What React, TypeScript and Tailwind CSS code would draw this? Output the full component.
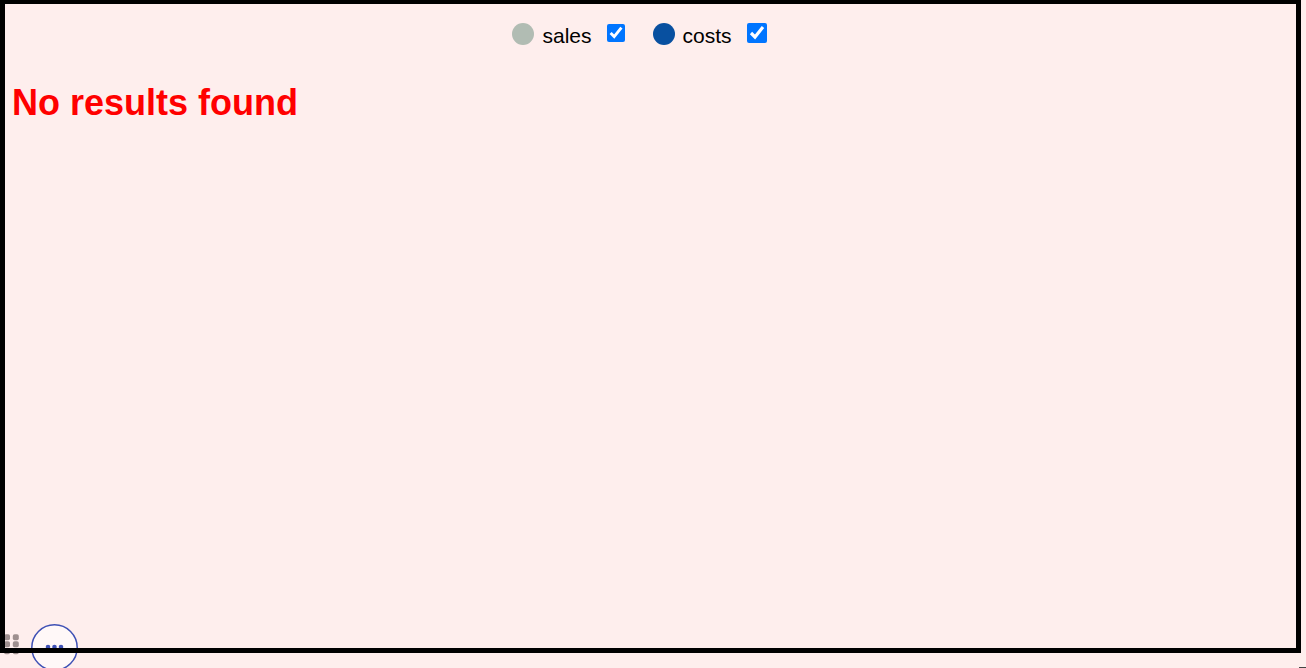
import { useState } from 'react';

const series = [
  { id: 'sales', dot: 'bg-[#b1bcb3]', box: 'size-[18px]' },
  { id: 'costs', dot: 'bg-[#0850a0]', box: 'size-5' },
];

function Legend() {
  const [visible, setVisible] = useState<Record<string, boolean>>({ sales: true, costs: true });

  return (
    <div className="flex justify-center gap-7 pt-4 pr-[22px]">
      {series.map(({ id, dot, box }) => (
        <div key={id} className="flex h-8 items-center">
          <span className={`mr-2 mb-1 size-[22px] rounded-full ${dot}`} />
          <label htmlFor={id} className="mr-[15px] text-[21px] leading-8">
            {id}
          </label>
          <input
            id={id}
            type="checkbox"
            checked={visible[id]}
            onChange={() => setVisible({ ...visible, [id]: !visible[id] })}
            className={`mb-1.5 ${box}`}
          />
        </div>
      ))}
    </div>
  );
}

// Floating handle in the corner, it sits below the panel border
function FloatingMenu() {
  return (
    <div className="absolute -bottom-[3px] left-1 flex items-center gap-3">
      <svg className="mb-1.5" width="15" height="22" viewBox="0 0 15 22" fill="#9e8f8f" aria-hidden="true">
        {[0, 7, 14].map((y) => (
          <g key={y}>
            <rect x="0" y={y + 0.3} width="6" height="6" rx="1.8" />
            <rect x="8.8" y={y + 0.3} width="6" height="6" rx="1.8" />
          </g>
        ))}
      </svg>
      <button type="button" aria-label="More options" className="size-[47px] rounded-full">
        <svg width="47" height="47" viewBox="0 0 47 47">
          <circle cx="23.5" cy="23.5" r="22.7" fill="#fff8f8" stroke="#3f51b5" strokeWidth="1.5" />
          <g fill="#3f51b5">
            <circle cx="17" cy="23" r="2.3" />
            <circle cx="23.5" cy="23" r="2.3" />
            <circle cx="30" cy="23" r="2.3" />
          </g>
        </svg>
      </button>
    </div>
  );
}

export default function App() {
  return (
    <div className="relative flex h-screen flex-col overflow-hidden bg-[#feeeed] pr-[5px] pb-[15px] font-['Liberation_Sans',Arial,sans-serif] text-black">
      <FloatingMenu />
      <main className="pointer-events-none relative flex-1 border-x-[5px] border-t-4 border-b-[5px] border-black">
        <div className="pointer-events-auto">
          <Legend />
          <h1 className="mt-[31px] px-[7px] text-4xl font-bold text-[#ff0000]">No results found</h1>
        </div>
      </main>
      <span className="absolute right-0 bottom-0 h-px w-[7px] bg-[#444444]" />
    </div>
  );
}
